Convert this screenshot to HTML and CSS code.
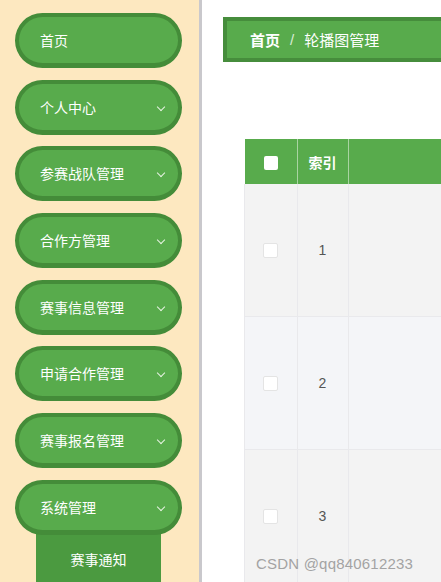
FILE: index.html
```html
<!DOCTYPE html>
<html lang="zh-CN">
<head>
  <meta charset="UTF-8" />
  <meta name="viewport" content="width=device-width, initial-scale=1" />
  <title>轮播图管理</title>
  <link rel="stylesheet" href="styles.css">
</head>
<body>
  <div class="layout">
    <aside class="sidebar">
      <div class="menu-item">首页</div>
      <div class="menu-item">个人中心<span class="arrow"></span></div>
      <div class="menu-item">参赛战队管理<span class="arrow"></span></div>
      <div class="menu-item">合作方管理<span class="arrow"></span></div>
      <div class="menu-item">赛事信息管理<span class="arrow"></span></div>
      <div class="menu-item">申请合作管理<span class="arrow"></span></div>
      <div class="menu-item">赛事报名管理<span class="arrow"></span></div>
      <div class="menu-item">系统管理<span class="arrow"></span></div>
      <div class="sub-item">赛事通知</div>
    </aside>

    <main class="main">
      <div class="breadcrumb">
        <b>首页</b><span class="sep">/</span><span>轮播图管理</span>
      </div>

      <table class="grid">
        <thead>
          <tr>
            <th class="col-check"><span class="check head"></span></th>
            <th class="col-index">索引</th>
            <th></th>
          </tr>
        </thead>
        <tbody>
          <tr class="odd">
            <td><span class="check"></span></td>
            <td>1</td>
            <td></td>
          </tr>
          <tr class="even">
            <td><span class="check"></span></td>
            <td>2</td>
            <td></td>
          </tr>
          <tr class="odd">
            <td><span class="check"></span></td>
            <td>3</td>
            <td></td>
          </tr>
        </tbody>
      </table>
    </main>
  </div>

  <div class="watermark">CSDN @qq840612233</div>
</body>
</html>
```

FILE: styles.css
```css
html, body { margin: 0; padding: 0; height: 100%; overflow: hidden; }
body { font-family: "Liberation Sans", "Noto Sans CJK SC", sans-serif; background: #fff; }

.layout { display: flex; height: 582px; }

.sidebar {
  width: 202px; flex-shrink: 0; background: #fde8c0;
  border-right: 3px solid #c9c8cc; box-sizing: border-box;
  padding: 13px 0 0 15px; display: flex; flex-direction: column; gap: 11.7px;
  overflow: hidden;
}
.menu-item {
  width: 167px; height: 55px; box-sizing: border-box; flex-shrink: 0;
  background: #58ab4c; border: 4px solid #448c39; border-bottom-width: 5px;
  border-radius: 28px; color: #fff; font-size: 14px;
  display: flex; align-items: center; padding: 0 0 0 21px; position: relative;
}
.arrow {
  position: absolute; right: 14px; top: 20px;
  width: 5px; height: 5px; border-right: 1.5px solid #e6f3e3; border-bottom: 1.5px solid #e6f3e3;
  transform: rotate(45deg);
}
.sub-item {
  width: 125px; height: 52px; margin: -14px 0 0 21px; background: #4b9a40;
  color: #fff; font-size: 14px; display: flex; align-items: center; justify-content: center;
  flex-shrink: 0;
}

.main { flex: 1; padding: 17px 0 0 21px; overflow: hidden; }

.breadcrumb {
  height: 45px; box-sizing: border-box; width: 240px;
  background: #58ab4c; border: 4px solid #468d3c; border-right: none;
  color: #fff; font-size: 15px; display: flex; align-items: center; padding-left: 23px;
}
.breadcrumb b { font-weight: bold; }
.breadcrumb .sep { margin: 0 10px; color: #d8ecd4; }

.grid {
  margin: 77px 0 0 21px; border-collapse: collapse; width: 240px; table-layout: fixed;
  font-size: 14px;
}
.grid th {
  background: #58ab4c; color: #fff; height: 45px; text-align: left; font-weight: bold;
  border-right: 1px solid #a9d4a2; padding: 0;
}
.grid .col-check { width: 52px; text-align: center; }
.grid .col-index { width: 51px; padding-left: 11px; box-sizing: border-box; }
.grid td {
  height: 132px; border: 1px solid #e9e9ec; border-top: none; text-align: center;
  color: #555; padding: 0; font-size: 14px;
}
.grid tr.odd td { background: #f3f3f3; }
.grid tr.even td { background: #f4f5f8; }

.check {
  display: inline-block; width: 13px; height: 13px; background: #fff;
  border: 1px solid #e4e4e4; border-radius: 2px; vertical-align: middle;
}
.check.head { width: 14px; height: 14px; border: none; border-radius: 2px; }

.watermark {
  position: absolute; left: 256px; top: 555px; color: #a3a3a3;
  font-family: "Liberation Sans", sans-serif; font-size: 15px; letter-spacing: 0.2px;
}
```
